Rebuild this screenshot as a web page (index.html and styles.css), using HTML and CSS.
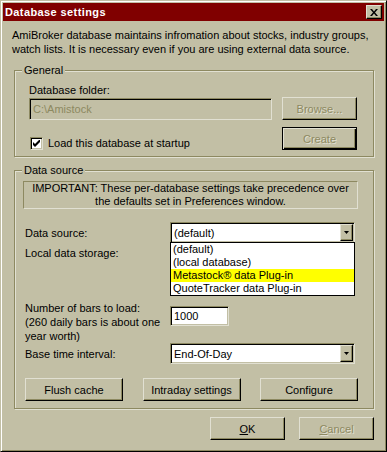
FILE: index.html
```html
<!DOCTYPE html>
<html lang="en">
<head>
  <meta charset="UTF-8" />
  <title>Database settings</title>
  <link rel="stylesheet" href="styles.css">
</head>
<body>
  <div class="dialog">
    <div class="titlebar">
      <span class="title">Database settings</span>
      <button class="close-btn">
        <svg width="8" height="7" viewBox="0 0 8 7"><path d="M0 0h2l2 2.5L6 0h2L5 3.5 8 7H6L4 4.5 2 7H0l3-3.5z" fill="#000"/></svg>
      </button>
    </div>

    <div class="content">
      <p class="intro">AmiBroker database maintains infromation about stocks, industry groups,<br>watch lists. It is necessary even if you are using external data source.</p>

      <fieldset class="group general">
        <legend>General</legend>
        <div class="general-grid">
          <span class="field-label">Database folder:</span>
          <div class="edit disabled">C:\Amistock</div>
          <button class="btn browse" disabled>Browse...</button>
          <label class="check">
            <span class="checkbox">
              <svg width="7" height="7" viewBox="0 0 7 7"><path d="M0 2v3l2 2 5-5V-1L2 4z" fill="#000"/></svg>
            </span>
            Load this database at startup
          </label>
          <button class="btn default" disabled>Create</button>
        </div>
      </fieldset>

      <fieldset class="group source">
        <legend>Data source</legend>
        <div class="source-body">
          <div class="notice">IMPORTANT: These per-database settings take precedence over<br>the defaults set in Preferences window.</div>

          <div class="form-grid">
            <span class="row-label">Data source:</span>
            <div class="combo-wrap">
              <div class="combo">
                <span class="combo-text">(default)</span>
                <span class="combo-btn"><svg width="5" height="3" viewBox="0 0 5 3"><path d="M0 0h5L2.5 3z" fill="#000"/></svg></span>
              </div>
              <ul class="dropdown">
                <li>(default)</li>
                <li>(local database)</li>
                <li class="selected">Metastock® data Plug-in</li>
                <li>QuoteTracker data Plug-in</li>
              </ul>
            </div>

            <span class="row-label top">Local data storage:</span>
            <div></div>

            <span class="row-label multi">Number of bars to load:<br>(260 daily bars is about one<br>year worth)</span>
            <div class="edit bars">1000</div>

            <span class="row-label">Base time interval:</span>
            <div class="combo">
              <span class="combo-text">End-Of-Day</span>
              <span class="combo-btn"><svg width="5" height="3" viewBox="0 0 5 3"><path d="M0 0h5L2.5 3z" fill="#000"/></svg></span>
            </div>
          </div>

          <div class="btn-row">
            <button class="btn wide">Flush cache</button>
            <button class="btn wide">Intraday settings</button>
            <button class="btn wide">Configure</button>
          </div>
        </div>
      </fieldset>

      <div class="footer">
        <button class="btn"><u>O</u>K</button>
        <button class="btn" disabled><u>C</u>ancel</button>
      </div>
    </div>
  </div>
</body>
</html>
```

FILE: styles.css
```css
* { box-sizing: border-box; }

body {
  margin: 0;
  background: #c2bfa5;
  font-family: "Liberation Sans", Arial, sans-serif;
  font-size: 11px;
  color: #000;
}

.dialog {
  width: 387px;
  height: 452px;
  background: #c2bfa5;
  border: 1px solid;
  border-color: #c2bfa5 #000 #000 #c2bfa5;
  box-shadow: inset 1px 1px 0 #fff, inset -1px -1px 0 #8d8961;
  padding: 2px;
}

.titlebar {
  height: 18px;
  background: #800000;
  display: flex;
  align-items: center;
  justify-content: space-between;
  padding: 0 2px 0 2px;
}

.title {
  color: #fff;
  font-weight: bold;
  font-size: 11px;
  letter-spacing: 0.4px;
  line-height: 18px;
}

.close-btn {
  width: 16px;
  height: 14px;
  padding: 0;
  background: #c2bfa5;
  border: 1px solid;
  border-color: #e1e0d2 #000 #000 #e1e0d2;
  box-shadow: inset -1px -1px 0 #8d8961;
  display: flex;
  align-items: center;
  justify-content: center;
}

.content {
  padding: 7px 0 0 0;
}

.intro {
  margin: 0 0 0 9px;
  line-height: 14px;
}

/* group boxes */
.group {
  margin: 0 10px 0 11px;
  padding: 0;
  border: 1px solid #8d8961;
  box-shadow: inset 1px 1px 0 #e1e0d2, 1px 1px 0 #e1e0d2;
  min-width: 0;
}

.group legend {
  margin-left: 7px;
  padding: 0 2px;
  line-height: 14px;
  background: #c2bfa5;
}

.general {
  margin-top: 7px;
}

.general-grid {
  display: grid;
  grid-template-columns: 243px 75px;
  column-gap: 10px;
  padding: 6px 0 6px 14px;
}

.field-label {
  grid-column: 1 / 3;
  line-height: 14px;
  margin-bottom: 1px;
}

.edit {
  height: 22px;
  padding: 3px 3px 0;
  line-height: 14px;
  background: #fff;
  border: 1px solid;
  border-color: #8d8961 #e1e0d2 #e1e0d2 #8d8961;
  box-shadow: inset 1px 1px 0 #000, inset -1px -1px 0 #c2bfa5;
}

.edit.disabled {
  background: #c2bfa5;
  color: #8d8961;
}

.btn {
  height: 23px;
  padding: 0;
  font-family: inherit;
  font-size: 11px;
  color: #000;
  background: #c2bfa5;
  border: 1px solid;
  border-color: #e1e0d2 #000 #000 #e1e0d2;
  box-shadow: inset -1px -1px 0 #8d8961;
}

.btn:disabled {
  color: #8d8961;
  text-shadow: 1px 1px 0 #e1e0d2;
}

.btn.browse {
  margin-top: -1px;
}

.btn.default {
  margin-top: 7px;
  border: 1px solid #000;
  box-shadow: inset 1px 1px 0 #e1e0d2, inset -1px -1px 0 #000, inset -2px -2px 0 #8d8961;
}

.check {
  display: flex;
  align-items: center;
  gap: 5px;
  align-self: end;
  margin: 0 0 0 1px;
  line-height: 14px;
}

.checkbox {
  width: 13px;
  height: 13px;
  background: #fff;
  border: 1px solid;
  border-color: #8d8961 #e1e0d2 #e1e0d2 #8d8961;
  box-shadow: inset 1px 1px 0 #000, inset -1px -1px 0 #c2bfa5;
  display: flex;
  align-items: center;
  justify-content: center;
}

.source {
  margin-top: 6px;
}

.source-body {
  padding: 4px 15px 7px 8px;
}

.notice {
  height: 28px;
  text-align: center;
  line-height: 13px;
  border: 1px solid;
  border-color: #8d8961 #e1e0d2 #e1e0d2 #8d8961;
}

.form-grid {
  display: grid;
  grid-template-columns: 145px 185px;
  grid-template-rows: 21px 58px 42px 21px;
  margin: 13px 0 0 2px;
}

.row-label {
  line-height: 14px;
  align-self: center;
}

.row-label.top {
  align-self: start;
  padding-top: 3px;
}

.row-label.multi {
  align-self: start;
}

.edit.bars {
  width: 59px;
  height: 20px;
  margin-top: 5px;
  padding-top: 2px;
}

.combo-wrap {
  position: relative;
}

.combo {
  height: 21px;
  display: flex;
  align-items: center;
  justify-content: space-between;
  background: #fff;
  border: 1px solid;
  border-color: #8d8961 #e1e0d2 #e1e0d2 #8d8961;
  box-shadow: inset 1px 1px 0 #000, inset -1px -1px 0 #c2bfa5;
  padding: 1px 1px 1px 3px;
}

.combo-btn {
  width: 13px;
  height: 17px;
  background: #c2bfa5;
  border: 1px solid;
  border-color: #e1e0d2 #000 #000 #e1e0d2;
  box-shadow: inset -1px -1px 0 #8d8961;
  display: flex;
  align-items: center;
  justify-content: center;
}

.dropdown {
  position: absolute;
  top: 20px;
  left: 0;
  right: 0;
  margin: 0;
  padding: 0;
  list-style: none;
  background: #fff;
  border: 1px solid #000;
}

.dropdown li {
  height: 13px;
  line-height: 13px;
  padding-left: 2px;
}

.dropdown li.selected {
  background: #ffff00;
}

.btn-row {
  display: flex;
  justify-content: space-between;
  margin: 14px 0 0 2px;
}

.btn.wide {
  width: 98px;
}

.footer {
  display: flex;
  justify-content: flex-end;
  gap: 14px;
  margin: 8px 10px 0 0;
}

.footer .btn {
  width: 75px;
}
```
